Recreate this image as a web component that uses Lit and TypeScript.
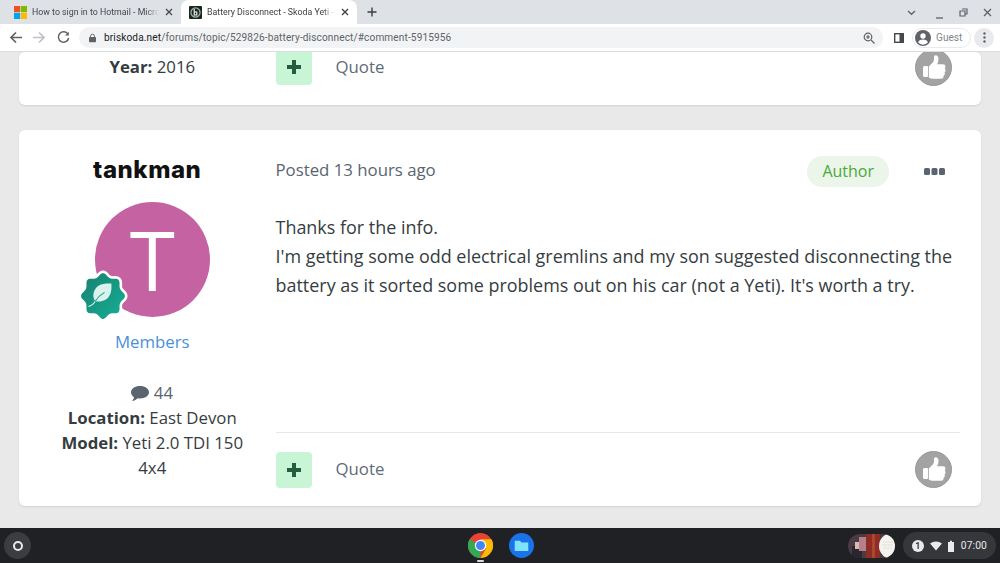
import { LitElement, html, css, svg } from "lit";
import { customElement } from "lit/decorators.js";

const thumb = html`<svg class="thumb" viewBox="0 0 37 37"><circle cx="18.500" cy="18.500" r="18" fill="#a3a3a3" stroke="#989898"/><path d="M8 18.500q0-1.500 1.500-1.500h2.500q1 0 1 1v9q0 1-1 1h-2.500q-1.500 0-1.500-1.500zM13.800 17.500l4-4q1.200-1.500 1.200-3.500v-2q0-1.800 1.500-1.800q3 0 3 3.800q0 3-1.500 5.300h6q2.500 0 2.500 2.300q0 1.200-.8 1.900q1 .8.800 2.200q-.1 1.200-1 1.800q.6 1 .2 2.100q-.3 1-1.200 1.400q.3 2.700-2.500 2.700h-8q-2.500 0-4.200-1.300z" fill="#fff"/></svg>`;

const actions = html`<div class="actions">
  <div class="plus"><svg viewBox="0 0 14 14"><path d="M5 0h4v5h5v4H9v5H5V9H0V5h5z" fill="#255c3e"/></svg></div>
  <span class="quote">Quote</span>
  ${thumb}
</div>`;

const back = svg`<path d="M14 7.500H3.500M8 2.500l-5 5 5 5" fill="none" stroke-width="1.700"/>`;

// Scalloped eight-lobed outline of the member badge.
const badgePath = (() => {
  const pts: string[] = [];
  for (let i = 0; i < 96; i++) {
    const a = (i / 96) * Math.PI * 2 - Math.PI / 2;
    const r = 21.5 + 1.8 * Math.cos(8 * a + Math.PI * 4);
    pts.push(`${(25 + r * Math.cos(a) * 0.96).toFixed(2)},${(25 + r * Math.sin(a)).toFixed(2)}`);
  }
  return `M${pts.join("L")}Z`;
})();

@customElement("app-root")
export class AppRoot extends LitElement {
  static styles = css`
    :host { display: flex; flex-direction: column; width: 1000px; height: 563px; overflow: hidden; font-family: "Open Sans", sans-serif; color: #353c41; background: #e9e9e9; }
    .tabs { flex: none; height: 24px; background: #dee1e6; display: flex; font-family: Roboto, "Liberation Sans", sans-serif; font-size: 8.800px; color: #45494e; }
    .tab { width: 181px; display: flex; align-items: center; box-sizing: border-box; padding-left: 14px; white-space: nowrap; }
    .tab.on { width: 176px; padding-left: 8px; background: #fff; border-radius: 8px 8px 0 0; color: #3c4043; }
    .tab .title { flex: 1; overflow: hidden; margin-left: 5px; -webkit-mask-image: linear-gradient(to left, transparent, #000 12px); mask-image: linear-gradient(to left, transparent, #000 12px); }
    .tab svg.fav { flex: none; width: 13px; height: 13px; }
    .tabx { flex: none; width: 8px; height: 8px; margin: 0 8px 0 6px; }
    .newtab { width: 10px; height: 10px; margin: 7px 0 0 10px; }
    .tabtools { margin-left: auto; display: flex; align-items: center; gap: 15px; padding-right: 8px; }
    .tabtools svg { width: 9px; height: 9px; display: block; }
    .tabtools .chev { margin-right: 4px; }
    .tabtools .min { transform: translateY(2px); }
    .bar { flex: none; height: 28px; box-sizing: border-box; background: #fff; border-bottom: 1px solid #dadce0; display: flex; align-items: center; padding: 0 6px 0 8px; position: relative; z-index: 2; }
    .nav { width: 15px; height: 15px; margin-right: 9px; flex: none; stroke: #5f6368; }
    .nav.off { stroke: #bdc1c6; transform: scaleX(-1); }
    .nav.last { margin-right: 8px; }
    .omni { flex: 1; height: 21px; border-radius: 11px; background: #f1f3f4; display: flex; align-items: center; padding: 0 8px 0 10px; font: 10.100px Roboto, "Liberation Sans", sans-serif; color: #5f6368; letter-spacing: .12px; min-width: 0; }
    .omni b { font-weight: 400; color: #202124; }
    .lock { width: 7px; height: 10px; margin-right: 8px; }
    .zoomi { width: 12px; height: 12px; margin-left: auto; }
    .side { width: 10px; height: 10px; flex: none; margin: 0 8px 0 11px; }
    .guest { height: 20px; width: 59px; box-sizing: border-box; border: 1px solid #e8eaed; border-radius: 10px; display: flex; align-items: center; gap: 5px; padding-left: 2px; font: 10.100px Roboto, "Liberation Sans", sans-serif; color: #80868b; }
    .guest svg { width: 16px; height: 16px; }
    .menu { width: 20px; height: 20px; border-radius: 50%; background: #e8eaed; margin-left: 3px; display: flex; align-items: center; justify-content: center; }
    .menu svg { width: 3px; height: 11px; }
    .page { flex: 1; min-height: 0; overflow: hidden; display: flex; flex-direction: column; justify-content: flex-end; gap: 25px; padding: 0 19px 22px; }
    .card { flex: none; background: #fff; border-radius: 6px; box-shadow: 0 1px 2px rgba(0,0,0,.1); display: flex; font-size: 16.800px; line-height: 25px; }
    .card.top { height: 53px; overflow: hidden; align-items: flex-end; }
    .card.post { height: 376px; }
    .author { width: 256.500px; flex: none; box-sizing: border-box; padding: 25px 0 0 10px; text-align: center; }
    .top .author { padding: 0 0 26px 10px; }
    .name { font: 800 24px/30px Inter, "DejaVu Sans", sans-serif; color: #111; letter-spacing: .55px; padding-right: 10px; margin-bottom: 17px; }
    .avatarwrap { position: relative; width: 115px; height: 115px; margin: 0 auto; }
    .avatar { width: 115px; height: 115px; border-radius: 50%; background: #c562a2; color: #fff; font: 400 82px/115px "Open Sans", sans-serif; text-align: center; }
    .badge { position: absolute; left: -18px; top: 67.500px; width: 52px; height: 52px; }
    .group { color: #4a90d9; margin: 12px 0 0; }
    .stats { margin-top: 26px; padding: 0 20px; }
    .bubble { width: 18px; height: 15px; vertical-align: -2px; }
    .count44 { color: #5a6570; }
    .main { flex: 1; min-width: 0; padding-right: 21px; display: flex; flex-direction: column; }
    .top .main { align-self: stretch; justify-content: flex-end; }
    .head { display: flex; align-items: center; height: 31px; margin-top: 26px; color: #5a6570; }
    .posted { padding-bottom: 4px; }
    .pill { margin-left: auto; background: #ebf5e9; color: #49a93a; height: 31px; line-height: 31px; padding: 0 15px; border-radius: 16px; font-size: 16px; }
    .dots { width: 21px; height: 7px; margin: 0 15px 0 35px; }
    .body { flex: 1; margin: 0; padding-top: 26px; font-size: 17.950px; line-height: 29px; color: #353c41; }
    .actions { flex: none; height: 74px; box-sizing: border-box; border-top: 1px solid #e8e8e8; display: flex; align-items: center; }
    .top .actions { border-top: 0; height: 36px; margin-bottom: 20px; }
    .plus { width: 36px; height: 36px; border-radius: 4px; background: #c7f5d6; display: flex; align-items: center; justify-content: center; }
    .plus svg { width: 14px; height: 14px; }
    .quote { margin-left: 24px; color: #5f6b76; padding-bottom: 3px; }
    .top .quote { padding-bottom: 1px; }
    .thumb { width: 37px; height: 37px; margin: 0 8px 0 auto; }
    .dock { flex: none; height: 35px; background: #202124; display: flex; align-items: center; position: relative; padding: 0 4px; }
    .launcher { width: 27px; height: 27px; border-radius: 50%; background: #3c3d40; display: flex; align-items: center; justify-content: center; }
    .launcher i { width: 6px; height: 6px; border: 2px solid #e8eaed; border-radius: 50%; display: block; }
    .apps { position: absolute; left: 468px; top: 5px; display: flex; gap: 16px; }
    .apps svg { width: 25px; height: 25px; display: block; }
    .shelf { position: absolute; left: 477px; top: 32px; width: 7px; height: 2px; background: #dadce0; border-radius: 1px; }
    .thumbs { margin-left: auto; width: 47px; height: 24px; display: block; margin-right: 8px; }
    .tray { height: 27px; border-radius: 14px; background: #36373a; display: flex; align-items: center; padding: 0 9px; font: 10.300px Roboto, "Liberation Sans", sans-serif; color: #e8eaed; }
    .count { width: 12px; height: 12px; border-radius: 50%; background: #e8eaed; color: #202124; font-size: 9px; line-height: 12px; text-align: center; font-weight: 500; }
    .tray svg { width: 12px; height: 12px; }
    .tray .wifi { margin: 0 3px 0 6px; }
    .tray .time { letter-spacing: .1px; margin-left: 4px; }
  `;

  render() {
    return html`
      <div class="tabs">
        <div class="tab">
          <svg class="fav" viewBox="0 0 12 12"><path fill="#f25022" d="M0 0h5.700v5.700H0z"/><path fill="#7fba00" d="M6.300 0H12v5.700H6.300z"/><path fill="#00a4ef" d="M0 6.300h5.700V12H0z"/><path fill="#ffb900" d="M6.300 6.300H12V12H6.300z"/></svg>
          <span class="title">How to sign in to Hotmail - Micro</span>
          <svg class="tabx" viewBox="0 0 8 8"><path d="M1 1l6 6M7 1L1 7" stroke="#45494e" stroke-width="1.300"/></svg>
        </div>
        <div class="tab on">
          <svg class="fav" viewBox="0 0 12 12"><rect width="12" height="12" rx="1" fill="#16261c"/><circle cx="6" cy="6" r="4.200" fill="none" stroke="#9fb0a6" stroke-width="1.200"/><path d="M4.800 2.800v5.500h2.400v-2.800H4.800" fill="none" stroke="#fff" stroke-width="1"/></svg>
          <span class="title">Battery Disconnect - Skoda Yeti -</span>
          <svg class="tabx" viewBox="0 0 8 8"><path d="M1 1l6 6M7 1L1 7" stroke="#3c4043" stroke-width="1.300"/></svg>
        </div>
        <svg class="newtab" viewBox="0 0 10 10"><path d="M5 .5v9M.5 5h9" stroke="#3c4043" stroke-width="1.400"/></svg>
        <div class="tabtools">
          <svg class="chev" viewBox="0 0 9 9"><path d="M1 3l3.500 3.300L8 3" fill="none" stroke="#5f6368" stroke-width="1.300"/></svg>
          <svg class="min" viewBox="0 0 9 9"><path d="M1 8h7" stroke="#5f6368" stroke-width="1.300"/></svg>
          <svg viewBox="0 0 9 9"><path d="M3 1h5v5H6.500M1 3h5v5H1z" fill="none" stroke="#5f6368" stroke-width="1.200"/></svg>
          <svg viewBox="0 0 9 9"><path d="M1 1l7 7M8 1L1 8" stroke="#5f6368" stroke-width="1.300"/></svg>
        </div>
      </div>
      <div class="bar">
        <svg class="nav" viewBox="0 0 15 15">${back}</svg>
        <svg class="nav off" viewBox="0 0 15 15">${back}</svg>
        <svg class="nav last" viewBox="0 0 15 15"><path d="M12 4.200A5.200 5.200 0 1 0 12.700 8" fill="none" stroke-width="1.500"/><path d="M12.800 1.800v3.800H9z" fill="#5f6368" stroke="none"/></svg>
        <div class="omni">
          <svg class="lock" viewBox="0 0 8 10"><path d="M1.800 4V2.800a2.200 2.200 0 0 1 4.400 0V4" fill="none" stroke="#5f6368"/><rect y="3.800" width="8" height="6" rx="1" fill="#5f6368"/></svg>
          <span><b>briskoda.net</b>/forums/topic/529826-battery-disconnect/#comment-5915956</span>
          <svg class="zoomi" viewBox="0 0 12 12"><circle cx="5" cy="5" r="3.800" fill="none" stroke="#5f6368" stroke-width="1.200"/><path d="M8 8l3.500 3.500M3 5h4M5 3v4" stroke="#5f6368" stroke-width="1.200"/></svg>
        </div>
        <svg class="side" viewBox="0 0 10 10"><rect x=".7" y=".7" width="8.600" height="8.600" fill="none" stroke="#45494e" stroke-width="1.400"/><rect x="5.500" y="1" width="4" height="8" fill="#45494e"/></svg>
        <div class="guest">
          <svg viewBox="0 0 16 16"><circle cx="8" cy="8" r="8" fill="#5f6368"/><circle cx="8" cy="6" r="2.700" fill="#fff"/><path d="M3 12.300c1-2 3-2.700 5-2.700s4 .7 5 2.700a6.500 6.500 0 0 1-10 0z" fill="#fff"/></svg>
          Guest
        </div>
        <div class="menu"><svg viewBox="0 0 3 11"><circle cx="1.500" cy="1.500" r="1.200" fill="#5f6368"/><circle cx="1.500" cy="5.500" r="1.200" fill="#5f6368"/><circle cx="1.500" cy="9.500" r="1.200" fill="#5f6368"/></svg></div>
      </div>
      <div class="page">
        <div class="card top">
          <div class="author"><b>Year:</b> 2016</div>
          <div class="main">${actions}</div>
        </div>
        <div class="card post">
          <div class="author">
            <div class="name">tankman</div>
            <div class="avatarwrap">
              <div class="avatar">T</div>
              <svg class="badge" viewBox="0 0 50 50">
                <defs><linearGradient id="bg" x1="0" y1="0" x2="1" y2="1"><stop offset="0" stop-color="#167f70"/><stop offset="1" stop-color="#17b096"/></linearGradient></defs>
                <path d=${badgePath} fill="url(#bg)" stroke="#fff" stroke-width="2.500" stroke-linejoin="round"/>
                <path d="M33 13c-9-.5-15 1.500-17 9-.8 3 0 6 1.500 8 6.500 1 12-1 14.500-7 1.200-3 1.300-6.500 1-10z" fill="#d9f3ec"/>
                <path d="M11 35c3.500-.8 5-2.300 6.500-5" fill="none" stroke="#d9f3ec" stroke-width="1"/>
                <path d="M17.500 30c2.500-4 5.500-6.500 9-8.500" fill="none" stroke="#1a9c85" stroke-width="1"/>
              </svg>
            </div>
            <div class="group">Members</div>
            <div class="stats">
              <div><svg class="bubble" viewBox="0 0 18 15"><path d="M9 0c5 0 9 2.700 9 6.200s-4 6.200-9 6.200c-.8 0-1.600 0-2.300-.2C5 13.800 3 14.700 1 15c1-1 1.800-2.300 2-3.800C1.200 10 0 8.200 0 6.200 0 2.700 4 0 9 0z" fill="#5a6570"/></svg> <span class="count44">44</span></div>
              <div><b>Location:</b> East Devon</div>
              <div><b>Model:</b> Yeti 2.0 TDI 150 4x4</div>
            </div>
          </div>
          <div class="main">
            <div class="head">
              <span class="posted">Posted 13 hours ago</span>
              <span class="pill">Author</span>
              <svg class="dots" viewBox="0 0 21 7"><rect width="6" height="7" rx="1.500" fill="#5a6570"/><rect x="7.500" width="6" height="7" rx="1.500" fill="#5a6570"/><rect x="15" width="6" height="7" rx="1.500" fill="#5a6570"/></svg>
            </div>
            <p class="body">Thanks for the info.<br>I'm getting some odd electrical gremlins and my son suggested disconnecting the battery as it sorted some problems out on his car (not a Yeti). It's worth a try.</p>
            ${actions}
          </div>
        </div>
      </div>
      <div class="dock">
        <div class="launcher"><i></i></div>
        <div class="apps">
          <svg viewBox="0 0 24 24"><circle cx="12" cy="12" r="12" fill="#ea4335"/><path d="M12 12L1.600 6A12 12 0 0 0 12 24z" fill="#34a853"/><path d="M12 6h10.400A12 12 0 0 1 12 24l5.200-9z" fill="#fbbc04"/><circle cx="12" cy="12" r="5.500" fill="#fff"/><circle cx="12" cy="12" r="4.300" fill="#4285f4"/></svg>
          <svg viewBox="0 0 24 24"><circle cx="12" cy="12" r="12" fill="#1a73e8"/><path d="M5.500 7.500h5l1.500 1.700h6.500v8h-13z" fill="#7fe3fb"/></svg>
        </div>
        <div class="shelf"></div>
        <svg class="thumbs" viewBox="0 0 47 24">
          <defs><clipPath id="tc"><rect width="47" height="24" rx="12"/></clipPath></defs>
          <g clip-path="url(#tc)">
            <rect width="47" height="24" fill="#4a3a42"/>
            <rect x="4" y="12" width="10" height="12" fill="#2b2730"/>
            <rect x="11" y="3" width="7" height="14" fill="#b5808c"/>
            <rect x="7" y="8" width="4" height="7" fill="#d8b8b0"/>
            <rect x="18" width="14" height="24" fill="#8e2d25"/>
            <rect x="24" width="3" height="24" fill="#a9482f"/>
            <circle cx="44" cy="12" r="13" fill="#f4f3f0"/>
            <path d="M35 8h10M34 11h11M35 14h9" stroke="#d6d5d1" stroke-width=".6"/>
          </g>
        </svg>
        <div class="tray">
          <span class="count">1</span>
          <svg class="wifi" viewBox="0 0 12 12"><path d="M0 3.500Q6 -.5 12 3.500L6 10.500z" fill="#e8eaed"/></svg>
          <svg viewBox="0 0 12 12"><path d="M3 2h2V.7h2V2h2v10H3z" fill="#e8eaed"/></svg>
          <span class="time">07:00</span>
        </div>
      </div>
    `;
  }
}
